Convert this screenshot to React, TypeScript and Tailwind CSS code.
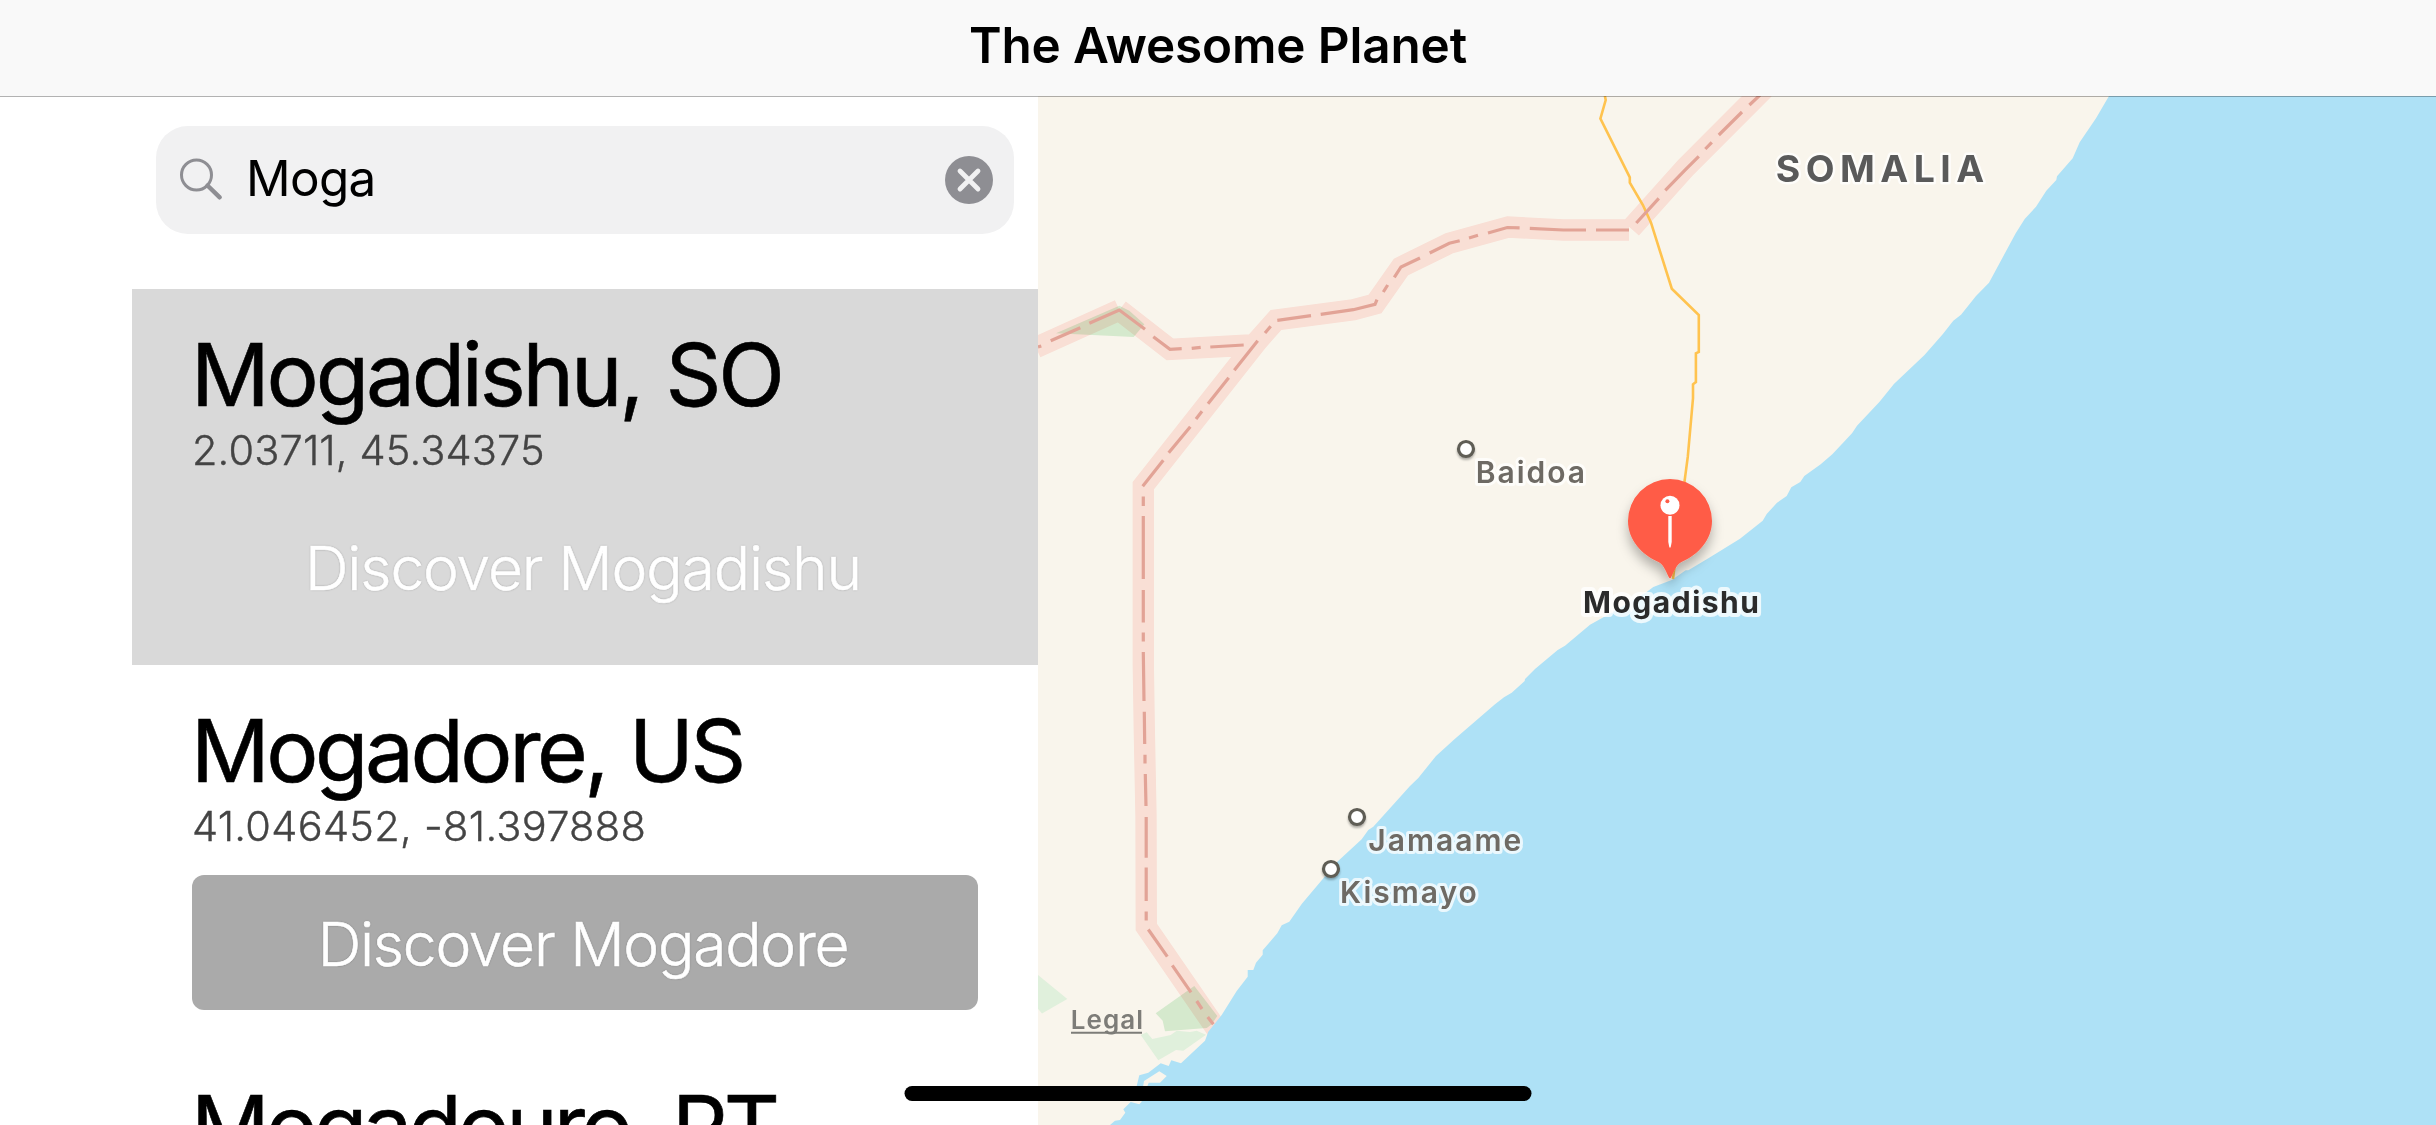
type City = {
  name: string;
  title: string;
  coordinates: string;
  titleSpacing: string;
  coordinateSpacing: string;
  buttonSpacing: string;
  selected?: boolean;
};

const cities: City[] = [
  {
    name: "Mogadishu",
    title: "Mogadishu, SO",
    coordinates: "2.03711, 45.34375",
    titleSpacing: "tracking-[-3.2px] [word-spacing:3px]",
    coordinateSpacing: "tracking-[0.15px]",
    buttonSpacing: "tracking-[-1.15px]",
    selected: true,
  },
  {
    name: "Mogadore",
    title: "Mogadore, US",
    coordinates: "41.046452, -81.397888",
    titleSpacing: "tracking-[-3.5px] [word-spacing:2px]",
    coordinateSpacing: "tracking-[0.3px]",
    buttonSpacing: "tracking-[-1.25px]",
  },
  {
    name: "Mogadouro",
    title: "Mogadouro, PT",
    coordinates: "41.33333, -6.71667",
    titleSpacing: "tracking-[-4px] [word-spacing:1px]",
    coordinateSpacing: "tracking-[0.3px]",
    buttonSpacing: "tracking-[-1.25px]",
  },
];

function SearchIcon() {
  return (
    <svg className="h-[44px] w-[44px] shrink-0" viewBox="0 0 44 44" fill="none" stroke="#8e8e93">
      <circle cx="17.5" cy="17" r="15" strokeWidth="3" />
      <path d="M28.5 27.5 L40.7 39.3" strokeWidth="4.4" strokeLinecap="round" />
    </svg>
  );
}

function ClearIcon() {
  return (
    <svg className="h-[48px] w-[48px]" viewBox="0 0 48 48">
      <circle cx="24" cy="24" r="24" fill="#8e8e93" />
      <path d="M15 15 L33 33 M33 15 L15 33" stroke="#f1f1f2" strokeWidth="4.8" strokeLinecap="round" />
    </svg>
  );
}

function SearchField() {
  return (
    <div className="mx-6 mt-[30px] flex h-[108px] items-center rounded-[32px] bg-[#f1f1f2] pr-[21px] pl-[23px]">
      <SearchIcon />
      <span className="-mt-[5px] ml-[23px] flex-1 text-[49.4px] leading-[60px] tracking-[-0.67px] text-black">Moga</span>
      <button aria-label="Clear">
        <ClearIcon />
      </button>
    </div>
  );
}

function CityRow({ city }: { city: City }) {
  return (
    <li className={`flex h-[376px] shrink-0 flex-col px-[60px] pt-[33px] ${city.selected ? "bg-[#d9d9d9]" : "bg-white"}`}>
      <h2
        className={`-ml-px text-[87.2px] leading-[105px] whitespace-nowrap text-black [-webkit-text-stroke:0.6px_#000] ${city.titleSpacing}`}
      >
        {city.title}
      </h2>
      <p
        className={`text-[41.5px] leading-[46px] font-light text-[#444444] [-webkit-text-stroke:0.4px_#444444] ${city.coordinateSpacing}`}
      >
        {city.coordinates}
      </p>
      <button
        className={`mt-[26px] h-[135px] rounded-xl pr-[4px] text-center text-[60.5px] leading-[138px] font-light text-white [-webkit-text-stroke:0.6px_#fff] [text-shadow:0_0_2px_rgba(0,0,0,0.35)] ${city.buttonSpacing} ${city.selected ? "bg-transparent" : "bg-[#aaaaaa]"}`}
      >
        Discover {city.name}
      </button>
    </li>
  );
}

const borderBands = [
  "M1036 347.5 L1119.3 310",
  "M1119.3 310 L1170 349.3 L1250 345",
  "M1629 230 L1563.3 230 L1508.3 227 L1449.3 243.3 L1401 267 L1375 304 L1353.3 309.7 L1276 320 L1257.7 340.7 L1143.3 485.7 L1143.3 665 L1144.3 730 L1146 816 L1146.3 927 L1222 1037",
  "M1631 228.5 L1685.7 167.5 L1764 89",
];

const borderDashes = [
  "M1038 347 L1041.3 346", "M1050.7 340.7 L1080.3 327.7", "M1089.3 323.3 L1119.3 310 L1145 329.3",
  "M1153.3 336.7 L1170 349.3 L1181.7 348.7", "M1191.7 348.3 L1200.7 347.3", "M1210.3 347 L1243.7 345",
  "M1257.7 340.7 L1234.3 370.3", "M1228.7 377.7 L1208 403.7", "M1202 411.3 L1196 419", "M1190.3 426.7 L1168.7 452.7", "M1163.3 460.3 L1142.7 486.3",
  "M1270.7 326.3 L1265 333", "M1277.3 320.3 L1311 315.7", "M1320.7 314.3 L1353.3 309.7 L1375 304.3 L1377 299.7",
  "M1387.7 285 L1383.3 292", "M1394.3 277.3 L1401 267 L1420 258", "M1429.7 253 L1449.3 243.3 L1459.7 240.7",
  "M1469 238 L1478 235.3", "M1488 233 L1507.3 227.5 L1519.6 227.8", "M1529.8 228.3 L1563.3 230 L1586 230", "M1596 230 L1629 230",
  "M1636.3 223 L1658.8 198.3", "M1665.3 190.3 L1685.7 169.3 L1698.8 156.3", "M1705.3 149 L1711.8 142.3", "M1718.8 135 L1742 112", "M1749.4 105 L1760 95",
  "M1143.3 496.5 V506", "M1143.3 516 V579", "M1143.3 590 V622.6", "M1143.3 632.5 V641.6", "M1143.3 652 L1144 701",
  "M1144.3 711.7 L1144.7 744", "M1145 754.8 V763.4", "M1145.3 774 L1146 806", "M1146.2 817 V857.7", "M1146.2 867.6 V901", "M1146.2 911.5 V920.5",
  "M1148.3 929.5 L1167.3 956.7", "M1172.3 965.3 L1191 992.3", "M1196.7 1001 L1202 1009", "M1207.7 1017 L1213.3 1024.3",
];

const sea =
  "M2109 96 L2096 118.3 L2079.7 142.3 L2072.7 158.3 L2057 176.3 L2056.3 180 L2046.3 190.7 L2036 206.7 L2024.7 219 L2015.7 233.3 L1989 282.7 L1976 296 L1961 314.7 L1953.3 320.7 L1942.9 334 L1924.5 355 L1893.9 384 L1879.6 401.7 L1857 425.7 L1852 433.3 L1845.7 440 L1832.3 454.3 L1820.7 464.3 L1804.3 476 L1800.3 482 L1791.3 487.3 L1786.7 496 L1777 502.7 L1766.7 514 L1762.7 520.7 L1740 538.7 L1710 557.3 L1688.3 570.3 L1685.7 570.3 L1671.7 580 L1653.3 587 L1646.7 592 L1613.3 611.7 L1590 624.7 L1565 645.7 L1557.7 650 L1535 669 L1525 679 L1524.7 681 L1511.7 692.7 L1504 697.3 L1495 704.3 L1455 738.7 L1436 756 L1418.3 778 L1410 786 L1373.3 826.7 L1368.3 830 L1361.7 839.3 L1337.3 861.7 L1301.7 904 L1289.3 921.7 L1281.7 925.3 L1277.3 933.3 L1262.7 950.3 V954.7 L1256 962.7 L1253.3 970 H1247.7 V976.7 L1236.7 991 L1221.7 1015 L1208.3 1031.7 L1205 1040.7 L1181 1063.3 L1171.3 1060.3 L1168.7 1066 L1160.7 1063.3 L1148.3 1072.7 L1139.3 1075.3 L1136.7 1086 L1141.7 1101.7 L1139.3 1104.3 L1130.7 1102 L1123.3 1109.3 L1125.3 1112.7 L1120 1120 L1115 1120.7 L1110 1125 H2436 V96 Z";

const towns = [
  { name: "Baidoa", x: 1475.7, y: 483, dotX: 1466, dotY: 449 },
  { name: "Jamaame", x: 1368.3, y: 850.7, dotX: 1357, dotY: 817 },
  { name: "Kismayo", x: 1340, y: 902.7, dotX: 1331, dotY: 869 },
];

function PlanetMap() {
  return (
    <svg className="block h-full w-full font-['Inter',sans-serif]" viewBox="1038 96 1398 1029">
      <defs>
        <filter id="pinShadow" x="-50%" y="-50%" width="200%" height="200%">
          <feDropShadow dx="0" dy="8" stdDeviation="6" floodColor="#000" floodOpacity="0.28" />
        </filter>
        <filter id="dotShadow" x="-50%" y="-50%" width="200%" height="200%">
          <feDropShadow dx="0" dy="2" stdDeviation="1.2" floodColor="#000" floodOpacity="0.3" />
        </filter>
      </defs>

      <rect x="1038" y="96" width="1398" height="1029" fill="#f9f5ec" />

      <g fill="#d5e9cd">
        <path d="M1056 333.3 L1119.3 305.7 L1129.3 310.7 L1144.3 324.3 L1133.7 337 Z" />
        <path d="M1155.7 1013.3 L1194.3 986 L1217.3 1016 L1211.7 1024.3 L1206.7 1028 L1165 1031.3 L1162.7 1020.7 Z" />
      </g>
      <g fill="#e0f0dc">
        <path d="M1140.7 1035 L1146.7 1032.3 L1152.3 1039 L1170.7 1035 L1176.7 1030.7 L1190 1032 L1196.7 1030.7 L1206 1034.7 L1183.3 1050.7 L1176 1050 L1158.3 1060.3 Z" />
        <path d="M1038 975 L1067.3 999 L1042 1013.5 L1038 1008.8 Z" />
      </g>

      <g fill="none" stroke="#ffe8e6" strokeWidth="21.3" className="mix-blend-multiply isolate">
        <path d={borderBands.join(" ")} />
      </g>
      <path d={sea} fill="#aee1f6" />
      <path d="M1159.3 1071.3 L1166.7 1076 L1160 1082.7 H1148.7 L1147 1087 H1143 L1144 1081 Z" fill="#f9f5ec" />

      <path
        d="M1604.9 96 L1605.7 100 L1600.4 118.7 L1629.8 177.3 V182.7 L1642.9 205 L1651 222.7 L1671.8 288.7 L1698.8 315 V352 L1695.9 353.3 V382 L1693 384.3 V398.3 L1687.8 456.7 L1684.5 481.7 L1673 579"
        fill="none"
        stroke="#ffc34f"
        strokeWidth="2.6"
      />
      <path d={borderDashes.join(" ")} fill="none" stroke="#e2a396" strokeWidth="3.2" />

      {towns.map((town) => (
        <g key={town.name}>
          <circle cx={town.dotX} cy={town.dotY} r="7.5" fill="#fff" stroke="#5f5d55" strokeWidth="3.2" filter="url(#dotShadow)" />
          <text
            x={town.x}
            y={town.y}
            fill="#6e6a64"
            stroke="#fff"
            strokeOpacity="0.75"
            strokeWidth="6"
            strokeLinejoin="round"
            className="text-[30px] font-semibold tracking-[2px] [paint-order:stroke]"
          >
            {town.name}
          </text>
        </g>
      ))}

      <text
        x="1775.7"
        y="182"
        fill="#5a5a5a"
        stroke="#fff"
        strokeOpacity="0.75"
        strokeWidth="5"
        strokeLinejoin="round"
        className="text-[37.4px] font-bold tracking-[5.5px] [paint-order:stroke]"
      >
        SOMALIA
      </text>

      <g filter="url(#pinShadow)">
        <path
          d="M1658.5 562 C1642 555 1628 540 1628 521 A42 42 0 0 1 1712 521 C1712 540 1698 555 1681.5 562 C1677 564 1674.5 570 1671.3 577 Q1670 579.5 1668.7 577 C1665.5 570 1663 564 1658.5 562 Z"
          fill="#ff5c47"
        />
      </g>
      <circle cx="1670" cy="505.2" r="9.5" fill="#fff" />
      <circle cx="1667.4" cy="501.2" r="2" fill="#ff5c47" />
      <path d="M1668.3 516 H1671.7 V542 L1670.6 547.5 H1669.4 L1668.3 542 Z" fill="#fff" />

      <text
        x="1583"
        y="612.7"
        fill="#2b2b2b"
        stroke="#fff"
        strokeOpacity="0.78"
        strokeWidth="8"
        strokeLinejoin="round"
        className="text-[30px] font-bold tracking-[1.5px] [paint-order:stroke]"
      >
        Mogadishu
      </text>

      <text x="1070.7" y="1029" fill="#7d7c78" className="text-[26px] font-semibold tracking-[1.1px]">
        Legal
      </text>
      <path d="M1071 1032.8 H1142" stroke="#7d7c78" strokeWidth="2" />
    </svg>
  );
}

export default function App() {
  return (
    <div className="relative flex h-[1125px] w-[2436px] flex-col overflow-hidden bg-white font-['Inter',sans-serif]">
      <header className="z-10 h-[96px] shrink-0 bg-[#f9f9f9] shadow-[0_1px_0_rgba(0,0,0,0.3)]">
        <h1 className="text-center text-[49.4px] leading-[90px] font-semibold tracking-[-0.13px] text-black">
          The Awesome Planet
        </h1>
      </header>

      <main className="flex min-h-0 flex-1">
        <section className="ml-[132px] flex w-[906px] shrink-0 flex-col overflow-hidden">
          <SearchField />
          <ul className="mt-[55px] flex flex-1 flex-col overflow-hidden">
            {cities.map((city) => (
              <CityRow key={city.name} city={city} />
            ))}
          </ul>
        </section>
        <section className="min-w-0 flex-1">
          <PlanetMap />
        </section>
      </main>

      <div className="absolute bottom-6 left-1/2 z-20 h-[15px] w-[627px] -translate-x-1/2 rounded-full bg-black" />
    </div>
  );
}
